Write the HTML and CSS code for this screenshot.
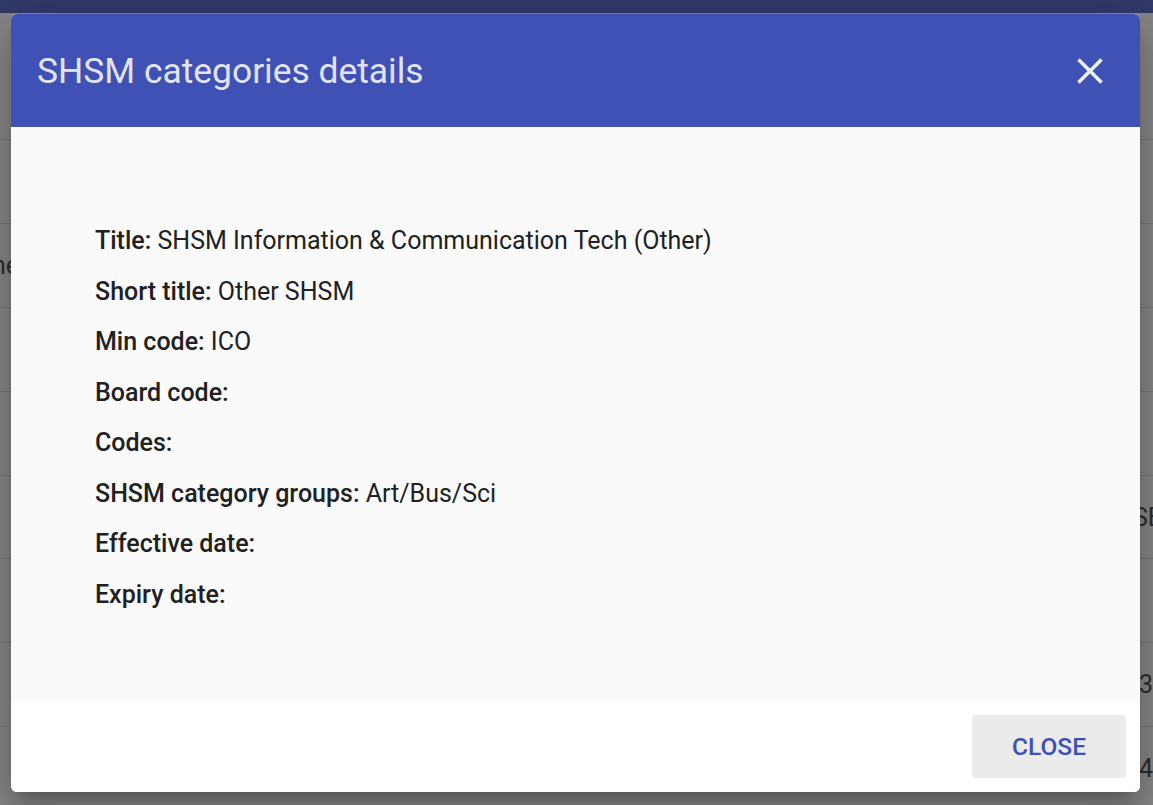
FILE: index.html
```html
<!DOCTYPE html>
<html lang="en">
<head>
<meta charset="utf-8">
<title>SHSM categories details</title>
<link rel="stylesheet" href="styles.css">
</head>
<body>
<div class="page">
  <div class="appbar"></div>
  <div class="table">
    <div class="trow thead"><span class="cl"></span><span class="cr"></span></div>
    <div class="trow"><span class="cl"></span><span class="cr"></span></div>
    <div class="trow"><span class="cl">ne</span><span class="cr"></span></div>
    <div class="trow"><span class="cl"></span><span class="cr"></span></div>
    <div class="trow"><span class="cl"></span><span class="cr"></span></div>
    <div class="trow"><span class="cl"></span><span class="cr">SE</span></div>
    <div class="trow"><span class="cl"></span><span class="cr"></span></div>
    <div class="trow"><span class="cl"></span><span class="cr cr-num">3</span></div>
    <div class="trow"><span class="cl"></span><span class="cr cr-num">4I</span></div>
  </div>
</div>
<div class="backdrop"></div>
<div class="dialog" role="dialog" aria-labelledby="dlg-title">
  <header class="dlg-head">
    <h2 id="dlg-title" class="dlg-title">SHSM categories details</h2>
    <button class="icon-btn" aria-label="Close">
      <svg viewBox="0 0 24 24" width="44" height="44"><path fill="currentColor" d="M19 6.41L17.59 5 12 10.59 6.41 5 5 6.41 10.59 12 5 17.59 6.41 19 12 13.41 17.59 19 19 17.59 13.41 12z"/></svg>
    </button>
  </header>
  <div class="dlg-body">
    <p class="field"><b>Title:</b> SHSM Information &amp; Communication Tech (Other)</p>
    <p class="field"><b>Short title:</b> Other SHSM</p>
    <p class="field"><b>Min code:</b> ICO</p>
    <p class="field"><b>Board code:</b></p>
    <p class="field"><b>Codes:</b></p>
    <p class="field"><b>SHSM category groups:</b> Art/Bus/Sci</p>
    <p class="field"><b>Effective date:</b></p>
    <p class="field"><b>Expiry date:</b></p>
  </div>
  <footer class="dlg-foot">
    <button class="btn-close">CLOSE</button>
  </footer>
</div>
</body>
</html>
```

FILE: styles.css
```css
html, body {
  margin: 0;
  padding: 0;
  width: 1153px;
  height: 805px;
  overflow: hidden;
  font-family: Roboto, "Liberation Sans", Arial, sans-serif;
  background: #ffffff;
}

.page {
  width: 1153px;
  height: 805px;
  display: flex;
  flex-direction: column;
}

.appbar {
  height: 13px;
  background: #5d6ec9;
  flex: none;
}

.table {
  display: flex;
  flex-direction: column;
}

.trow {
  height: 83.9px;
  box-sizing: border-box;
  border-bottom: 1px solid #e0e0e0;
  display: flex;
  align-items: center;
  font-size: 25px;
  color: #555555;
  white-space: nowrap;
  flex: none;
}

.trow.thead {
  height: 127px;
}

.cl {
  margin-left: -8px;
}

.cr {
  margin-left: auto;
  width: 20px;
  overflow: visible;
}

.cr-num {
  box-sizing: border-box;
  padding-left: 6px;
}

.backdrop {
  position: fixed;
  inset: 0;
  background: rgba(0, 0, 0, 0.48);
}

.dialog {
  position: absolute;
  left: 11px;
  top: 14px;
  width: 1129px;
  height: 778px;
  display: flex;
  flex-direction: column;
  border-radius: 6px;
  overflow: hidden;
  background: #ffffff;
  box-shadow: 0 11px 15px -7px rgba(0,0,0,0.2), 0 24px 38px 3px rgba(0,0,0,0.14), 0 9px 46px 8px rgba(0,0,0,0.12);
}

.dlg-head {
  height: 113px;
  flex: none;
  background: #3f51b5;
  display: flex;
  align-items: center;
  justify-content: space-between;
  padding: 0 28px 0 26px;
}

.dlg-title {
  margin: 0;
  font-size: 35.4px;
  font-weight: 400;
  color: rgba(255, 255, 255, 0.87);
}

.icon-btn {
  border: 0;
  background: transparent;
  padding: 0;
  width: 44px;
  height: 44px;
  color: rgba(255, 255, 255, 0.9);
  display: flex;
  cursor: pointer;
}

.dlg-body {
  flex: 1;
  background: #fafafa;
  padding: 89px 84px 0;
}

.field {
  margin: 0;
  font-size: 25px;
  line-height: 50.57px;
  color: #212121;
}

.field b {
  font-weight: 500;
}

.dlg-foot {
  height: 91px;
  flex: none;
  background: #ffffff;
  display: flex;
  align-items: center;
  justify-content: flex-end;
  padding-right: 14px;
}

.btn-close {
  width: 154px;
  height: 63px;
  border: 0;
  border-radius: 4px;
  background: #ebebeb;
  color: #3f51b5;
  font-family: Roboto, "Liberation Sans", Arial, sans-serif;
  font-size: 24.5px;
  font-weight: 500;
  cursor: pointer;
}
```
